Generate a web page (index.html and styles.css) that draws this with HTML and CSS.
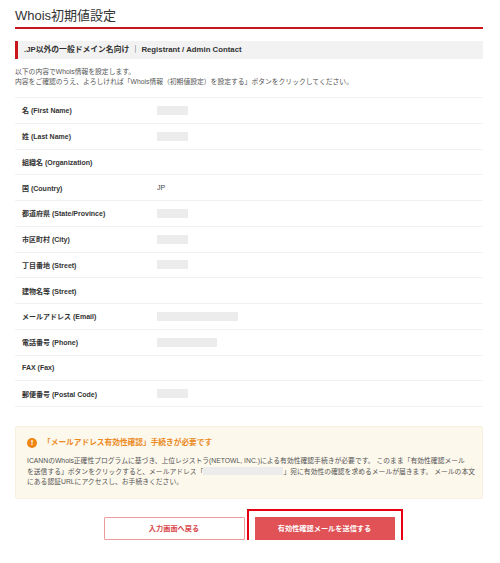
FILE: index.html
```html
<!DOCTYPE html>
<html lang="ja">
<head>
  <meta charset="UTF-8">
  <meta name="viewport" content="width=device-width, initial-scale=1.0">
  <title>Whois初期値設定</title>
  <link rel="stylesheet" href="styles.css">
</head>
<body>
  <div class="page">
    <h1 class="page-title">Whois初期値設定</h1>

    <h2 class="section-head">.JP以外の一般ドメイン名向け ｜ Registrant / Admin Contact</h2>

    <p class="lead">以下の内容でWhois情報を設定します。<br>内容をご確認のうえ、よろしければ「Whois情報（初期値設定）を設定する」ボタンをクリックしてください。</p>

    <table class="confirm">
      <tr><th>名 (First Name)</th><td><span class="mask"></span></td></tr>
      <tr><th>姓 (Last Name)</th><td><span class="mask"></span></td></tr>
      <tr><th>組織名 (Organization)</th><td></td></tr>
      <tr><th>国 (Country)</th><td>JP</td></tr>
      <tr><th>都道府県 (State/Province)</th><td><span class="mask"></span></td></tr>
      <tr><th>市区町村 (City)</th><td><span class="mask"></span></td></tr>
      <tr><th>丁目番地 (Street)</th><td><span class="mask"></span></td></tr>
      <tr><th>建物名等 (Street)</th><td></td></tr>
      <tr><th>メールアドレス (Email)</th><td><span class="mask mask-email"></span></td></tr>
      <tr><th>電話番号 (Phone)</th><td><span class="mask mask-phone"></span></td></tr>
      <tr><th>FAX (Fax)</th><td></td></tr>
      <tr><th>郵便番号 (Postal Code)</th><td><span class="mask"></span></td></tr>
    </table>

    <div class="notice">
      <div class="notice-title"><span class="notice-icon">!</span>「メールアドレス有効性確認」手続きが必要です</div>
      <p class="notice-body">ICANNのWhois正確性プログラムに基づき、上位レジストラ(NETOWL, INC.)による有効性確認手続きが必要です。 このまま「有効性確認メール<br>を送信する」ボタンをクリックすると、メールアドレス「<span class="mask mask-inline"></span>」宛に有効性の確認を求めるメールが届きます。 メールの本文<br>にある認証URLにアクセスし、お手続きください。</p>
    </div>

    <div class="actions">
      <a href="#" class="btn btn-back">入力画面へ戻る</a>
      <a href="#" class="btn btn-send">有効性確認メールを送信する</a>
    </div>
  </div>
</body>
</html>
```

FILE: styles.css
```css
* { box-sizing: border-box; margin: 0; padding: 0; }
body {
  font-family: "Liberation Sans", "Noto Sans CJK JP", sans-serif;
  color: #333;
  background: #fff;
}

.page {
  padding: 0 17px 0 15px;
}

.page-title {
  font-size: 13px;
  font-weight: 400;
  line-height: 19px;
  padding-top: 6px;
  padding-bottom: 2px;
  border-bottom: 2px solid #c9161d;
  color: #333;
}

.section-head {
  margin-top: 12px;
  height: 18px;
  line-height: 18px;
  background: #f2f2f2;
  border-left: 3px solid #c9161d;
  padding-left: 6px;
  font-size: 7.8px;
  font-weight: 700;
  color: #333;
}

.lead {
  margin-top: 8px;
  font-size: 6.8px;
  line-height: 10px;
  color: #555;
}

.confirm {
  width: 100%;
  margin-top: 10px;
  border-collapse: collapse;
  font-size: 7px;
}
.confirm tr {
  height: 25.75px;
  border-top: 1px solid #f2f2f2;
}
.confirm tr:last-child {
  border-bottom: 1px solid #f2f2f2;
}
.confirm th {
  width: 142px;
  padding-left: 7px;
  text-align: left;
  font-weight: 700;
  color: #333;
}
.confirm td {
  color: #444;
}

.mask {
  display: inline-block;
  width: 31px;
  height: 9px;
  background: #ececec;
  vertical-align: middle;
}
.mask-email { width: 81px; }
.mask-phone { width: 60px; }
.mask-inline {
  width: 80px;
  height: 8px;
  vertical-align: -1px;
}

.notice {
  margin-top: 19px;
  height: 73px;
  background: #fdf8ec;
  border: 1px solid #f8f0de;
  border-radius: 2px;
  padding: 10px 12px 0 11px;
}
.notice-title {
  display: flex;
  align-items: center;
  gap: 6px;
  font-size: 7.7px;
  font-weight: 700;
  color: #eb8a1e;
  line-height: 11px;
}
.notice-icon {
  width: 10px;
  height: 10px;
  border-radius: 50%;
  background: #ef8514;
  color: #fff;
  font-size: 8px;
  font-weight: 700;
  line-height: 10px;
  text-align: center;
}
.notice-body {
  margin-top: 8px;
  font-size: 6.8px;
  line-height: 10.5px;
  color: #555;
  white-space: nowrap;
}

.actions {
  display: flex;
  justify-content: center;
  gap: 10px;
  margin-top: 18px;
}
.btn {
  display: block;
  height: 23px;
  line-height: 21px;
  text-align: center;
  font-size: 7.2px;
  font-weight: 700;
  text-decoration: none;
}
.btn-back {
  width: 141px;
  background: #fff;
  border: 1px solid #ec9c9c;
  border-radius: 1px;
  color: #d9474b;
}
.btn-send {
  width: 140px;
  background: #e05256;
  border: 1px solid #e05256;
  color: #fff;
  outline: 2px solid #e60012;
  outline-offset: 6px;
}
```
